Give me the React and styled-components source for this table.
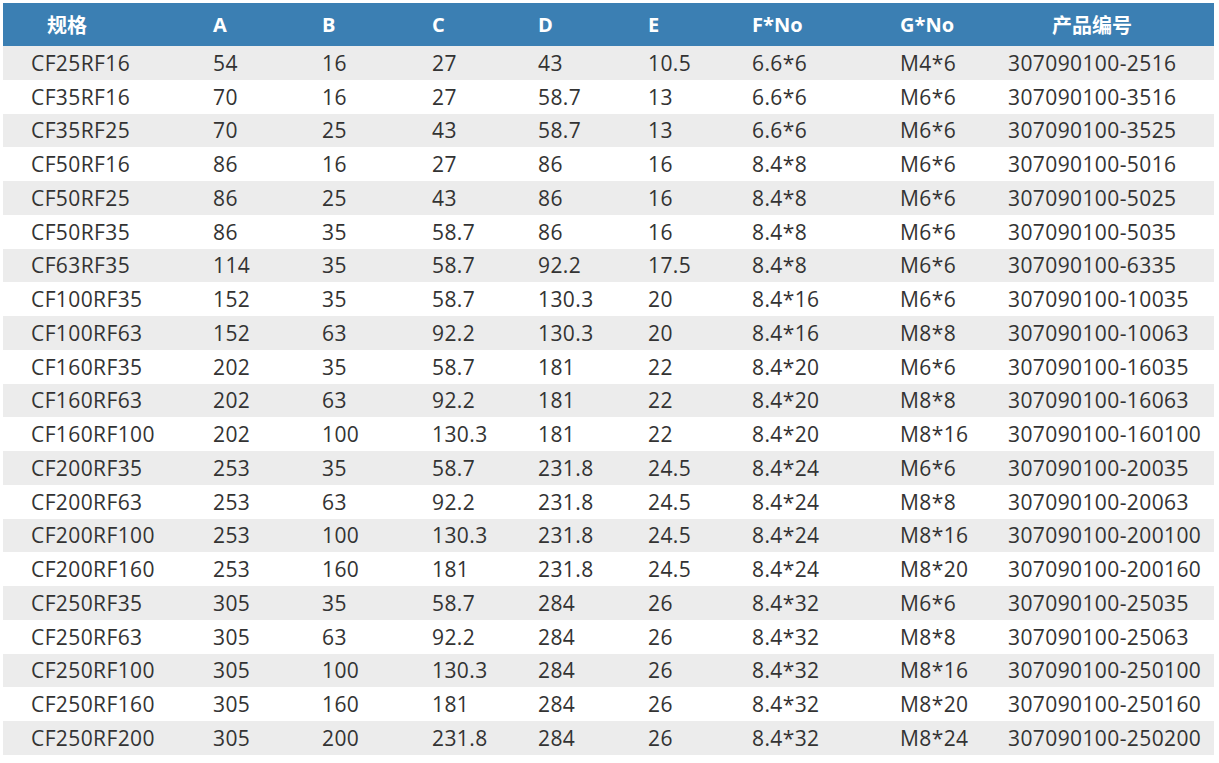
import React from "react";
import styled, { createGlobalStyle } from "styled-components";

const GlobalStyle = createGlobalStyle`
  html, body {
    margin: 0;
    padding: 0;
    background: #ffffff;
  }
  body {
    font-family: "Open Sans", "Noto Sans CJK SC", sans-serif;
  }
`;

const columns = [
  { key: "spec", title: "规格", width: 182, headIndent: 16 },
  { key: "a", title: "A", width: 109 },
  { key: "b", title: "B", width: 110 },
  { key: "c", title: "C", width: 106 },
  { key: "d", title: "D", width: 110 },
  { key: "e", title: "E", width: 104 },
  { key: "f", title: "F*No", width: 148 },
  { key: "g", title: "G*No", width: 108 },
  { key: "code", title: "产品编号", width: 234, headIndent: 44 },
];

const rows = [
  ["CF25RF16", "54", "16", "27", "43", "10.5", "6.6*6", "M4*6", "307090100-2516"],
  ["CF35RF16", "70", "16", "27", "58.7", "13", "6.6*6", "M6*6", "307090100-3516"],
  ["CF35RF25", "70", "25", "43", "58.7", "13", "6.6*6", "M6*6", "307090100-3525"],
  ["CF50RF16", "86", "16", "27", "86", "16", "8.4*8", "M6*6", "307090100-5016"],
  ["CF50RF25", "86", "25", "43", "86", "16", "8.4*8", "M6*6", "307090100-5025"],
  ["CF50RF35", "86", "35", "58.7", "86", "16", "8.4*8", "M6*6", "307090100-5035"],
  ["CF63RF35", "114", "35", "58.7", "92.2", "17.5", "8.4*8", "M6*6", "307090100-6335"],
  ["CF100RF35", "152", "35", "58.7", "130.3", "20", "8.4*16", "M6*6", "307090100-10035"],
  ["CF100RF63", "152", "63", "92.2", "130.3", "20", "8.4*16", "M8*8", "307090100-10063"],
  ["CF160RF35", "202", "35", "58.7", "181", "22", "8.4*20", "M6*6", "307090100-16035"],
  ["CF160RF63", "202", "63", "92.2", "181", "22", "8.4*20", "M8*8", "307090100-16063"],
  ["CF160RF100", "202", "100", "130.3", "181", "22", "8.4*20", "M8*16", "307090100-160100"],
  ["CF200RF35", "253", "35", "58.7", "231.8", "24.5", "8.4*24", "M6*6", "307090100-20035"],
  ["CF200RF63", "253", "63", "92.2", "231.8", "24.5", "8.4*24", "M8*8", "307090100-20063"],
  ["CF200RF100", "253", "100", "130.3", "231.8", "24.5", "8.4*24", "M8*16", "307090100-200100"],
  ["CF200RF160", "253", "160", "181", "231.8", "24.5", "8.4*24", "M8*20", "307090100-200160"],
  ["CF250RF35", "305", "35", "58.7", "284", "26", "8.4*32", "M6*6", "307090100-25035"],
  ["CF250RF63", "305", "63", "92.2", "284", "26", "8.4*32", "M8*8", "307090100-25063"],
  ["CF250RF100", "305", "100", "130.3", "284", "26", "8.4*32", "M8*16", "307090100-250100"],
  ["CF250RF160", "305", "160", "181", "284", "26", "8.4*32", "M8*20", "307090100-250160"],
  ["CF250RF200", "305", "200", "231.8", "284", "26", "8.4*32", "M8*24", "307090100-250200"],
];

const gridTemplate = columns.map((c) => `${c.width}px`).join(" ");

const Page = styled.div`
  padding: 3px 0 0 3px;
`;

const Table = styled.div`
  width: 1211px;
  display: flex;
  flex-direction: column;
`;

const HeadRow = styled.div`
  display: grid;
  grid-template-columns: ${gridTemplate};
  height: 43px;
  align-items: center;
  background: #3b7fb3;
`;

const HeadCell = styled.div`
  padding-left: ${(p) => 28 + (p.$indent || 0)}px;
  color: #ffffff;
  font-family: "Open Sans", "Noto Sans CJK SC", sans-serif;
  font-weight: 700;
  font-size: 20px;
  white-space: nowrap;
`;

const Row = styled.div`
  display: grid;
  grid-template-columns: ${gridTemplate};
  height: 33.76px;
  align-items: center;
  background: ${(p) => (p.$striped ? "#ececec" : "#ffffff")};
`;

const Cell = styled.div`
  padding-left: 28px;
  color: #333333;
  font-family: "Open Sans", sans-serif;
  font-size: 21px;
  letter-spacing: 0.4px;
  white-space: nowrap;
`;

export default function App() {
  return (
    <Page>
      <GlobalStyle />
      <Table>
        <HeadRow>
          {columns.map((c) => (
            <HeadCell key={c.key} $indent={c.headIndent}>
              {c.title}
            </HeadCell>
          ))}
        </HeadRow>
        {rows.map((r, i) => (
          <Row key={r[0]} $striped={i % 2 === 0}>
            {r.map((v, j) => (
              <Cell key={columns[j].key}>{v}</Cell>
            ))}
          </Row>
        ))}
      </Table>
    </Page>
  );
}
